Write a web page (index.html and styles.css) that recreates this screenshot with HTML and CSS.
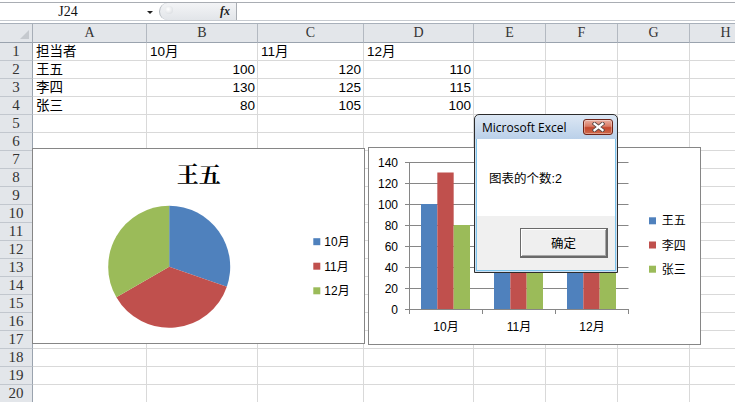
FILE: index.html
```html
<!DOCTYPE html>
<html lang="zh-CN">
<head>
<meta charset="utf-8">
<title>Excel</title>
<link rel="stylesheet" href="styles.css">
</head>
<body>
<div class="app">
  <div class="fbar">
    <div class="namebox"><span class="name">J24</span><span class="arrow"></span></div>
    <div class="pill"><span class="grip"></span><span class="fx">fx</span></div>
    <div class="finput"></div>
  </div>

  <div class="sheet">
    <div class="hrow"><div class="c corner"><span class="tri"></span></div><div class="c ch">A</div><div class="c ch">B</div><div class="c ch">C</div><div class="c ch">D</div><div class="c ch">E</div><div class="c ch">F</div><div class="c ch">G</div><div class="c ch">H</div></div>
    <div class="row"><div class="c rh">1</div><div class="c t">担当者</div><div class="c t">10月</div><div class="c t">11月</div><div class="c t">12月</div><div class="c"></div><div class="c"></div><div class="c"></div><div class="c"></div></div>
    <div class="row"><div class="c rh">2</div><div class="c t">王五</div><div class="c t n">100</div><div class="c t n">120</div><div class="c t n">110</div><div class="c"></div><div class="c"></div><div class="c"></div><div class="c"></div></div>
    <div class="row"><div class="c rh">3</div><div class="c t">李四</div><div class="c t n">130</div><div class="c t n">125</div><div class="c t n">115</div><div class="c"></div><div class="c"></div><div class="c"></div><div class="c"></div></div>
    <div class="row"><div class="c rh">4</div><div class="c t">张三</div><div class="c t n">80</div><div class="c t n">105</div><div class="c t n">100</div><div class="c"></div><div class="c"></div><div class="c"></div><div class="c"></div></div>
    <div class="row"><div class="c rh">5</div><div class="c"></div><div class="c"></div><div class="c"></div><div class="c"></div><div class="c"></div><div class="c"></div><div class="c"></div><div class="c"></div></div>
    <div class="row"><div class="c rh">6</div><div class="c"></div><div class="c"></div><div class="c"></div><div class="c"></div><div class="c"></div><div class="c"></div><div class="c"></div><div class="c"></div></div>
    <div class="row"><div class="c rh">7</div><div class="c"></div><div class="c"></div><div class="c"></div><div class="c"></div><div class="c"></div><div class="c"></div><div class="c"></div><div class="c"></div></div>
    <div class="row"><div class="c rh">8</div><div class="c"></div><div class="c"></div><div class="c"></div><div class="c"></div><div class="c"></div><div class="c"></div><div class="c"></div><div class="c"></div></div>
    <div class="row"><div class="c rh">9</div><div class="c"></div><div class="c"></div><div class="c"></div><div class="c"></div><div class="c"></div><div class="c"></div><div class="c"></div><div class="c"></div></div>
    <div class="row"><div class="c rh">10</div><div class="c"></div><div class="c"></div><div class="c"></div><div class="c"></div><div class="c"></div><div class="c"></div><div class="c"></div><div class="c"></div></div>
    <div class="row"><div class="c rh">11</div><div class="c"></div><div class="c"></div><div class="c"></div><div class="c"></div><div class="c"></div><div class="c"></div><div class="c"></div><div class="c"></div></div>
    <div class="row"><div class="c rh">12</div><div class="c"></div><div class="c"></div><div class="c"></div><div class="c"></div><div class="c"></div><div class="c"></div><div class="c"></div><div class="c"></div></div>
    <div class="row"><div class="c rh">13</div><div class="c"></div><div class="c"></div><div class="c"></div><div class="c"></div><div class="c"></div><div class="c"></div><div class="c"></div><div class="c"></div></div>
    <div class="row"><div class="c rh">14</div><div class="c"></div><div class="c"></div><div class="c"></div><div class="c"></div><div class="c"></div><div class="c"></div><div class="c"></div><div class="c"></div></div>
    <div class="row"><div class="c rh">15</div><div class="c"></div><div class="c"></div><div class="c"></div><div class="c"></div><div class="c"></div><div class="c"></div><div class="c"></div><div class="c"></div></div>
    <div class="row"><div class="c rh">16</div><div class="c"></div><div class="c"></div><div class="c"></div><div class="c"></div><div class="c"></div><div class="c"></div><div class="c"></div><div class="c"></div></div>
    <div class="row"><div class="c rh">17</div><div class="c"></div><div class="c"></div><div class="c"></div><div class="c"></div><div class="c"></div><div class="c"></div><div class="c"></div><div class="c"></div></div>
    <div class="row"><div class="c rh">18</div><div class="c"></div><div class="c"></div><div class="c"></div><div class="c"></div><div class="c"></div><div class="c"></div><div class="c"></div><div class="c"></div></div>
    <div class="row"><div class="c rh">19</div><div class="c"></div><div class="c"></div><div class="c"></div><div class="c"></div><div class="c"></div><div class="c"></div><div class="c"></div><div class="c"></div></div>
    <div class="row"><div class="c rh">20</div><div class="c"></div><div class="c"></div><div class="c"></div><div class="c"></div><div class="c"></div><div class="c"></div><div class="c"></div><div class="c"></div></div>
  </div>

  <div class="chart chart-pie">
    <svg width="331" height="194" viewBox="0 0 331 194">
      <text class="ptitle" x="165.7" y="32.5" text-anchor="middle">王五</text>
      <path class="s1" d="M136.2 117.8 L136.2 56.8 A61 61 0 0 1 193.85 137.75 Z"/>
      <path class="s2" d="M136.2 117.8 L193.85 137.75 A61 61 0 0 1 83.37 148.3 Z"/>
      <path class="s3" d="M136.2 117.8 L83.37 148.3 A61 61 0 0 1 136.2 56.8 Z"/>
      <rect class="s1" x="280.3" y="89.2" width="7" height="7"/>
      <text class="lbl" x="291.3" y="97.1">10月</text>
      <rect class="s2" x="280.3" y="113.7" width="7" height="7"/>
      <text class="lbl" x="291.3" y="121.6">11月</text>
      <rect class="s3" x="280.3" y="138.3" width="7" height="7"/>
      <text class="lbl" x="291.3" y="146.2">12月</text>
    </svg>
  </div>

  <div class="chart chart-bar">
    <svg width="331" height="196" viewBox="0 0 331 196">
      <g class="grid">
        <line x1="36" y1="14.5" x2="259.5" y2="14.5"/>
        <line x1="36" y1="35.5" x2="259.5" y2="35.5"/>
        <line x1="36" y1="56.5" x2="259.5" y2="56.5"/>
        <line x1="36" y1="77.5" x2="259.5" y2="77.5"/>
        <line x1="36" y1="98.5" x2="259.5" y2="98.5"/>
        <line x1="36" y1="119.5" x2="259.5" y2="119.5"/>
        <line x1="36" y1="140.5" x2="259.5" y2="140.5"/>
      </g>
      <rect class="s1" x="52" y="56" width="16.33" height="105"/>
      <rect class="s2" x="68.33" y="24.5" width="16.34" height="136.5"/>
      <rect class="s3" x="84.67" y="77" width="16.33" height="84"/>
      <rect class="s1" x="125" y="35" width="16.33" height="126"/>
      <rect class="s2" x="141.33" y="29.75" width="16.34" height="131.25"/>
      <rect class="s3" x="157.67" y="50.75" width="16.33" height="110.25"/>
      <rect class="s1" x="198" y="45.5" width="16.33" height="115.5"/>
      <rect class="s2" x="214.33" y="40.25" width="16.34" height="120.75"/>
      <rect class="s3" x="230.67" y="56" width="16.33" height="105"/>
      <g class="grid">
        <line x1="40.5" y1="14" x2="40.5" y2="166"/>
        <line x1="36" y1="161.5" x2="260" y2="161.5"/>
        <line x1="113.5" y1="161.5" x2="113.5" y2="166"/>
        <line x1="186.5" y1="161.5" x2="186.5" y2="166"/>
        <line x1="259.5" y1="161.5" x2="259.5" y2="166"/>
      </g>
      <g class="ax" text-anchor="end">
        <text x="29" y="18.8">140</text>
        <text x="29" y="39.8">120</text>
        <text x="29" y="60.8">100</text>
        <text x="29" y="81.8">80</text>
        <text x="29" y="102.8">60</text>
        <text x="29" y="123.8">40</text>
        <text x="29" y="144.8">20</text>
        <text x="29" y="165.8">0</text>
      </g>
      <g class="ax" text-anchor="middle">
        <text x="77" y="183">10月</text>
        <text x="150" y="183">11月</text>
        <text x="223" y="183">12月</text>
      </g>
      <rect class="s1" x="280" y="69.3" width="7" height="7"/>
      <text class="lbl" x="292.7" y="77.4">王五</text>
      <rect class="s2" x="280" y="93.5" width="7" height="7"/>
      <text class="lbl" x="292.7" y="101.6">李四</text>
      <rect class="s3" x="280" y="117.7" width="7" height="7"/>
      <text class="lbl" x="292.7" y="125.8">张三</text>
    </svg>
  </div>

  <div class="dlg">
    <div class="dlg-title">
      <span class="dlg-name">Microsoft Excel</span>
      <span class="dlg-close"><svg width="13" height="10" viewBox="0 0 13 10"><path class="xo" d="M2.5 1.8 L10.5 8.2 M10.5 1.8 L2.5 8.2"/><path class="xi" d="M2.5 1.8 L10.5 8.2 M10.5 1.8 L2.5 8.2"/></svg></span>
    </div>
    <div class="dlg-client">
      <div class="dlg-msg">图表的个数:2</div>
      <div class="dlg-foot"><div class="btn">确定</div></div>
    </div>
  </div>
</div>
</body>
</html>
```

FILE: styles.css
```css
html, body {
  margin: 0;
  padding: 0;
  background: #fff;
}
body {
  width: 735px;
  height: 402px;
  overflow: hidden;
  font-family: "Liberation Sans", "Noto Sans CJK SC", sans-serif;
  color: #000;
}
.app {
  position: relative;
  width: 735px;
  height: 402px;
  overflow: hidden;
}

/* formula bar */
.fbar {
  display: flex;
  height: 17px;
  margin-top: 2px;
  border-top: 1px solid #a9adb3;
  border-bottom: 1px solid #c6cad0;
}
.namebox {
  width: 159px;
  display: flex;
  align-items: center;
}
.name {
  width: 136px;
  text-align: center;
  font-family: "Liberation Serif", serif;
  font-size: 14px;
  line-height: 17px;
  color: #111;
}
.arrow {
  width: 0;
  height: 0;
  margin-left: 11px;
  margin-top: 1px;
  border-left: 3px solid transparent;
  border-right: 3px solid transparent;
  border-top: 3px solid #222;
}
.pill {
  width: 77px;
  box-sizing: border-box;
  display: flex;
  align-items: center;
  justify-content: space-between;
  padding: 0 6px 0 5px;
  background: linear-gradient(#f3f4f6, #e2e5e9);
  border-left: 1px solid #b5bac0;
  border-radius: 9px 0 0 9px;
}
.grip {
  width: 8px;
  height: 8px;
  margin-top: -4px;
  border-radius: 50%;
  background: radial-gradient(circle at 40% 40%, #ffffff, #d2d6db);
}
.fx {
  font-family: "Liberation Serif", serif;
  font-style: italic;
  font-weight: bold;
  font-size: 12px;
  color: #222;
}
.finput {
  flex: 1;
  border-left: 1px solid #a9adb3;
  background: #fff;
}

/* sheet grid */
.sheet {
  margin-top: 2px;
  border-top: 1px solid #a8b0ba;
}
.hrow, .row {
  display: grid;
  grid-template-columns: 33px 114px 111px 106px 110px 72px 72px 72px 72px;
}
.hrow { height: 19px; }
.row { height: 18px; }
.c {
  box-sizing: border-box;
  border-right: 1px solid #d9d9d9;
  border-bottom: 1px solid #d9d9d9;
  overflow: visible;
  white-space: nowrap;
}
.corner {
  background: #e3e6ea;
  border-right: 1px solid #a7aeb7;
  border-bottom: 1px solid #9aa3ae;
  display: flex;
  align-items: flex-end;
  justify-content: flex-end;
  padding: 0 3px 3px 0;
}
.tri {
  width: 9px;
  height: 9px;
  background: #c5c9ce;
  clip-path: polygon(100% 0, 100% 100%, 0 100%);
}
.ch {
  background: #e3e6ea;
  border-right: 1px solid #b3b9c1;
  border-bottom: 1px solid #9aa3ae;
  text-align: center;
  font-family: "Liberation Serif", serif;
  font-size: 14px;
  line-height: 18px;
  color: #333;
}
.rh {
  background: #e3e6ea;
  border-right: 1px solid #9aa3ae;
  border-bottom: 1px solid #c2c7ce;
  text-align: center;
  font-family: "Liberation Serif", serif;
  font-size: 15px;
  line-height: 17px;
  color: #333;
}
.t {
  padding-left: 3px;
  font-family: "Liberation Sans", "Noto Sans CJK SC", sans-serif;
  font-size: 13.5px;
  line-height: 17px;
  color: #000;
}
.n {
  text-align: right;
  padding-left: 0;
  padding-right: 2px;
}

/* charts */
.chart {
  position: absolute;
  box-sizing: border-box;
  background: #fff;
  border: 1px solid #868686;
}
.chart svg { display: block; }
.chart-pie {
  left: 32px;
  top: 148px;
  width: 333px;
  height: 196px;
}
.chart-bar {
  left: 368px;
  top: 147px;
  width: 333px;
  height: 198px;
}
.s1 { fill: #4f81bd; }
.s2 { fill: #c0504d; }
.s3 { fill: #9bbb59; }
.ptitle {
  font-family: "Noto Serif CJK SC", "Noto Sans CJK SC", serif;
  font-weight: bold;
  font-size: 22px;
  fill: #000;
}
.lbl {
  font-family: "Liberation Sans", "Noto Sans CJK SC", sans-serif;
  font-size: 12px;
  fill: #000;
}
.ax {
  font-family: "Liberation Sans", "Noto Sans CJK SC", sans-serif;
  font-size: 12px;
  fill: #000;
}
.grid line {
  stroke: #868686;
  stroke-width: 1;
}

/* message box */
.dlg {
  position: absolute;
  left: 474px;
  top: 114px;
  width: 144px;
  height: 159px;
  box-sizing: border-box;
  border: 1px solid #2c2c2c;
  border-radius: 5px 5px 0 0;
  padding: 0 1px 1px;
  background: linear-gradient(#dce7f4, #bad0e9 24px, #cfe0f2 24px);
  display: flex;
  flex-direction: column;
}
.dlg-title {
  height: 24px;
  flex: none;
  display: flex;
  align-items: center;
  justify-content: space-between;
  padding: 0 3px 0 6px;
}
.dlg-name {
  font-family: "Open Sans", "Noto Sans", sans-serif;
  font-size: 12px;
  color: #000;
}
.dlg-close {
  width: 30px;
  height: 16px;
  box-sizing: border-box;
  border: 1px solid #6f2418;
  border-radius: 3px;
  background: linear-gradient(#eab0a2, #d97a64 45%, #c3462c 55%, #cf6a4c);
  box-shadow: inset 0 0 0 1px rgba(255, 255, 255, 0.35);
  display: flex;
  align-items: center;
  justify-content: center;
}
.dlg-close svg { display: block; }
.xo {
  stroke: #5a4a48;
  stroke-width: 4;
  stroke-linecap: square;
  fill: none;
}
.xi {
  stroke: #ffffff;
  stroke-width: 2.2;
  stroke-linecap: square;
  fill: none;
}
.dlg-client {
  flex: 1;
  display: flex;
  flex-direction: column;
  background: #fff;
  border: 1px solid #7cc3ea;
  border-top: none;
}
.dlg-msg {
  height: 77px;
  flex: none;
  display: flex;
  align-items: center;
  padding-left: 12px;
  font-family: "Liberation Sans", "Noto Sans CJK SC", sans-serif;
  font-size: 12.5px;
  color: #000;
}
.dlg-foot {
  flex: 1;
  background: #f0f0f0;
  display: flex;
  justify-content: flex-end;
  align-items: flex-start;
  padding: 12px 7px 0 0;
}
.btn {
  width: 88px;
  height: 30px;
  box-sizing: border-box;
  border: 1px solid #6a6a6a;
  border-right-width: 2px;
  border-bottom-width: 2px;
  box-shadow: inset 1px 1px 0 #ffffff, inset -1px -1px 0 #a8a8a8;
  background: #efefef;
  display: flex;
  align-items: center;
  justify-content: center;
  font-size: 12.5px;
  color: #000;
}
```
